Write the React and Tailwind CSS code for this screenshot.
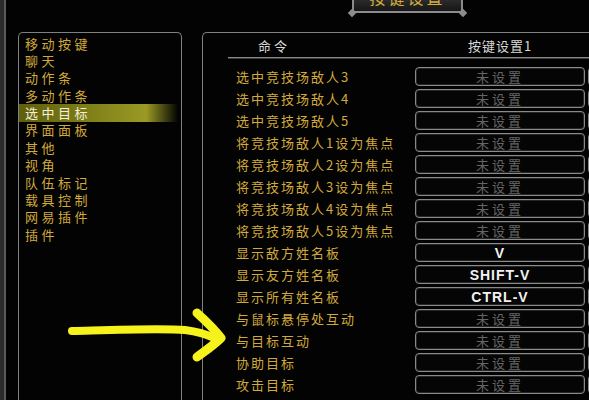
import React from "react";

const cjk = { fontFamily: '"Noto Sans CJK SC", "Noto Sans CJK JP", sans-serif' };
const sans = { fontFamily: '"Liberation Sans", Arial, sans-serif' };

const cats = ["移动按键", "聊天", "动作条", "多动作条", "选中目标", "界面面板", "其他", "视角", "队伍标记", "载具控制", "网易插件", "插件"];

const rows = [
  ["选中竞技场敌人3", null],
  ["选中竞技场敌人4", null],
  ["选中竞技场敌人5", null],
  ["将竞技场敌人1设为焦点", null],
  ["将竞技场敌人2设为焦点", null],
  ["将竞技场敌人3设为焦点", null],
  ["将竞技场敌人4设为焦点", null],
  ["将竞技场敌人5设为焦点", null],
  ["显示敌方姓名板", "V"],
  ["显示友方姓名板", "SHIFT-V"],
  ["显示所有姓名板", "CTRL-V"],
  ["与鼠标悬停处互动", null],
  ["与目标互动", null],
  ["协助目标", null],
  ["攻击目标", null],
];

function KeyButton({ label }) {
  return (
    <div className="w-[170px] h-[19px] shrink-0 rounded-[4px] border border-[#8a8a8a] bg-[#050505] shadow-[inset_0_0_0_1px_#262626] flex items-center justify-center">
      {label ? (
        <span className="text-[14px] leading-none font-bold text-[#f2f2f2] tracking-[1px]" style={sans}>{label}</span>
      ) : (
        <span className="text-[13px] leading-none text-[#656565] tracking-[3px]" style={cjk}>未设置</span>
      )}
    </div>
  );
}

export default function App() {
  return (
    <div className="relative w-[589px] h-[400px] overflow-hidden bg-[#030303]" style={cjk}>
      {/* outer frame */}
      <div className="absolute left-0 top-0 h-[400px] w-[4px] bg-[#2c2c2c]" />
      <div className="absolute left-[4px] top-0 h-[400px] w-[2px] bg-[#5a5a5a]" />

      <div className="flex pt-[32px] pl-[18px] h-full">
        {/* left panel */}
        <div className="w-[164px] h-[400px] shrink-0 rounded-t-[5px] border border-b-0 border-[#808080] pt-[2px]">
          {cats.map((c, i) => (
            <div
              key={c}
              className={
                "h-[17.36px] flex items-center pl-[6px] mr-[3px] text-[13px] tracking-[3.5px] leading-[14px] " +
                (i === 4
                  ? "bg-gradient-to-r from-[#5f5f0c] via-[#9a9a24] via-80% to-transparent text-[#f4f1d8]"
                  : "text-[#d2aa3c]")
              }
            >
              {c}
            </div>
          ))}
        </div>

        {/* right panel */}
        <div className="ml-[20px] w-[420px] shrink-0 h-[400px] rounded-tl-[5px] border-l border-t border-[#808080]">
          <div className="h-[24px] flex items-center">
            <div className="w-[212px] shrink-0 pl-[55px] text-[13px] leading-none tracking-[3px] text-[#d8d8d8]">命令</div>
            <div className="w-[170px] text-center text-[13px] leading-none tracking-[1px] text-[#d8d8d8]">按键设置1</div>
          </div>
          <div className="ml-[25px] h-[2px] border-t border-[#8a8a8a] border-b-[#3a3a3a] border-b" />
          <div className="pt-[8px] flex flex-col gap-[3px]">
            {rows.map(([name, key]) => (
              <div key={name} className="h-[19px] flex items-center">
                <div className="w-[212px] shrink-0 pl-[33px] text-[13px] tracking-[2px] text-[#d2aa3c] whitespace-nowrap leading-none">
                  {name}
                </div>
                <KeyButton label={key} />
                <div className="ml-[3px] w-[170px] h-[19px] shrink-0 rounded-[4px] border border-[#8a8a8a]" />
              </div>
            ))}
          </div>
        </div>
      </div>

      {/* title tab */}
      <div className="absolute left-[352px] top-[-10px] w-[111px] h-[23px] rounded-b-[3px] border-2 border-[#8c8c8c] bg-gradient-to-b from-[#3c3c3c] to-[#161616] flex items-center justify-center overflow-hidden">
        <span className="text-[16px] leading-none tracking-[3px] text-[#d6ad3e] -translate-y-[5px]">按键设置</span>
      </div>
      <div className="absolute left-[349px] top-[10px] w-[6px] h-[6px] rotate-45 bg-[#8c8c8c]" />
      <div className="absolute left-[460px] top-[10px] w-[6px] h-[6px] rotate-45 bg-[#8c8c8c]" />

      {/* yellow arrow annotation */}
      <svg className="absolute left-0 top-0 pointer-events-none" width="589" height="400" viewBox="0 0 589 400">
        <g fill="none" stroke="#f6f21c" strokeLinecap="round" strokeLinejoin="round">
          <path d="M72 331 C 110 330, 160 328, 185 330 C 200 332, 208 335, 214 338" strokeWidth="8" />
          <path d="M197 313 C 207 322, 215 330, 221 338 C 214 345, 205 351, 197 357" strokeWidth="9" />
        </g>
      </svg>
    </div>
  );
}
